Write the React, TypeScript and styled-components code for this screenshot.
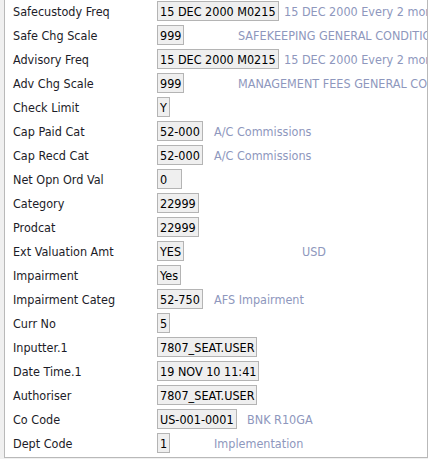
import React from "react";
import styled, { createGlobalStyle } from "styled-components";

const Global = createGlobalStyle`
  html, body { margin: 0; padding: 0; background: #f0f0f0; }
  body { font-family: "DejaVu Sans Condensed", "DejaVu Sans", sans-serif; font-size: 12.5px; }
  #root { height: 459px; overflow: hidden; }
`;

const Panel = styled.div`
  margin-left: 4px;
  width: 422px;
  background: #ffffff;
  border-left: 1px solid #b9b9b9;
  border-right: 1px solid #b9b9b9;
  border-bottom: 1px solid #b9b9b9;
  overflow: hidden;
  padding-bottom: 1px;
`;

const Row = styled.div`
  display: flex;
  align-items: flex-start;
  height: 24px;
  padding-top: 1px;
  box-sizing: border-box;
  white-space: nowrap;
`;

const Label = styled.div`
  flex: 0 0 152px;
  padding-left: 8px;
  box-sizing: border-box;
  height: 20px;
  line-height: 21px;
  color: #1c1c28;
`;

const ValueArea = styled.div<{ $descAt: number }>`
  display: grid;
  grid-template-columns: ${(p) => p.$descAt}px auto;
  align-items: start;
`;

const Box = styled.div<{ $min?: number }>`
  justify-self: start;
  height: 20px;
  box-sizing: border-box;
  line-height: 19px;
  padding: 0 2px;
  min-width: ${(p) => (p.$min ? `${p.$min}px` : "0")};
  background: #efefef;
  border: 1px solid #b4b4b4;
  color: #000000;
`;

const Desc = styled.div`
  height: 20px;
  line-height: 21px;
  color: #8e97bd;
`;

type Field = { label: string; value: string; desc?: string; descAt?: number; min?: number };

const fields: Field[] = [
  { label: "Safecustody Freq", value: "15 DEC 2000 M0215", desc: "15 DEC 2000 Every 2 months on the 15th day", descAt: 127 },
  { label: "Safe Chg Scale", value: "999", desc: "SAFEKEEPING GENERAL CONDITIONS", descAt: 81 },
  { label: "Advisory Freq", value: "15 DEC 2000 M0215", desc: "15 DEC 2000 Every 2 months on the 15th day", descAt: 127 },
  { label: "Adv Chg Scale", value: "999", desc: "MANAGEMENT FEES GENERAL CONDITIONS", descAt: 81 },
  { label: "Check Limit", value: "Y" },
  { label: "Cap Paid Cat", value: "52-000", desc: "A/C Commissions", descAt: 57 },
  { label: "Cap Recd Cat", value: "52-000", desc: "A/C Commissions", descAt: 57 },
  { label: "Net Opn Ord Val", value: "0", min: 25 },
  { label: "Category", value: "22999" },
  { label: "Prodcat", value: "22999" },
  { label: "Ext Valuation Amt", value: "YES", desc: "USD", descAt: 145 },
  { label: "Impairment", value: "Yes" },
  { label: "Impairment Categ", value: "52-750", desc: "AFS Impairment", descAt: 57 },
  { label: "Curr No", value: "5" },
  { label: "Inputter.1", value: "7807_SEAT.USER" },
  { label: "Date Time.1", value: "19 NOV 10 11:41" },
  { label: "Authoriser", value: "7807_SEAT.USER" },
  { label: "Co Code", value: "US-001-0001", desc: "BNK R10GA", descAt: 90 },
  { label: "Dept Code", value: "1", desc: "Implementation", descAt: 57 },
];

export default function App() {
  return (
    <>
      <Global />
      <Panel>
        {fields.map((f) => (
          <Row key={f.label}>
            <Label>{f.label}</Label>
            <ValueArea $descAt={f.descAt ?? 0}>
              <Box $min={f.min}>{f.value}</Box>
              {f.desc ? <Desc>{f.desc}</Desc> : null}
            </ValueArea>
          </Row>
        ))}
      </Panel>
    </>
  );
}
